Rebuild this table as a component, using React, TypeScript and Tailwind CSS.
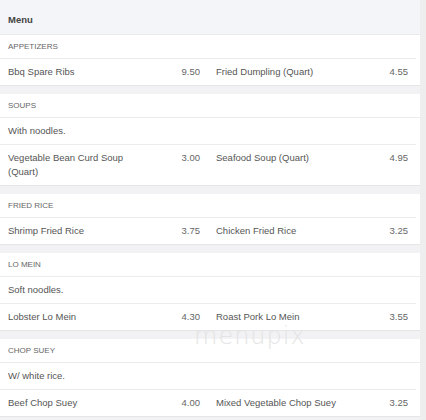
type Item = { name: string; price: string };
type Section = { title: string; note?: string; items: Item[] };

const sections: Section[] = [
  {
    title: "APPETIZERS",
    items: [
      { name: "Bbq Spare Ribs", price: "9.50" },
      { name: "Fried Dumpling (Quart)", price: "4.55" },
    ],
  },
  {
    title: "SOUPS",
    note: "With noodles.",
    items: [
      { name: "Vegetable Bean Curd Soup (Quart)", price: "3.00" },
      { name: "Seafood Soup (Quart)", price: "4.95" },
    ],
  },
  {
    title: "FRIED RICE",
    items: [
      { name: "Shrimp Fried Rice", price: "3.75" },
      { name: "Chicken Fried Rice", price: "3.25" },
    ],
  },
  {
    title: "LO MEIN",
    note: "Soft noodles.",
    items: [
      { name: "Lobster Lo Mein", price: "4.30" },
      { name: "Roast Pork Lo Mein", price: "3.55" },
    ],
  },
  {
    title: "CHOP SUEY",
    note: "W/ white rice.",
    items: [
      { name: "Beef Chop Suey", price: "4.00" },
      { name: "Mixed Vegetable Chop Suey", price: "3.25" },
    ],
  },
];

function MenuItem({ item }: { item: Item }) {
  return (
    <div className="flex items-start justify-between px-2 py-[6px]">
      <span className="w-[70%] leading-[14px]">{item.name}</span>
      <span className="leading-[14px] text-[#666]">{item.price}</span>
    </div>
  );
}

export default function App() {
  return (
    <div
      className="relative flex h-[420px] w-[426px] overflow-hidden bg-[#f2f2f4] text-[9.5px] text-[#555]"
      style={{ fontFamily: '"Liberation Sans", Arial, sans-serif' }}
    >
      <div className="w-[420px]">
        <div className="border-b border-[#e9e9ec] bg-[#f4f5f9] px-2 pb-[8px] pt-[13px] font-bold leading-[13px] text-[#444]">
          Menu
        </div>
        {sections.map((s) => (
          <div key={s.title} className="mb-[8px] border-b border-[#e6e6e8] bg-white">
            <div className="px-2 py-[6px] text-[8px] leading-[11px] text-[#666]">{s.title}</div>
            {s.note && (
              <div className="border-t border-[#ececee] px-2 py-[6px] leading-[14px]">{s.note}</div>
            )}
            <div className="grid w-[416px] grid-cols-2 border-t border-[#ececee]">
              {s.items.map((it) => (
                <MenuItem key={it.name} item={it} />
              ))}
            </div>
          </div>
        ))}
      </div>
      <div className="flex-1 bg-[#eeeeee]" />
      <div className="pointer-events-none absolute left-[194px] top-[327px] h-[18px]">
        <span
          className="block text-[24px] font-light leading-[18px] tracking-[1px] text-[#e4e4e4]"
          style={{ fontFamily: '"DejaVu Sans", sans-serif' }}
        >
          menupix
        </span>
      </div>
    </div>
  );
}
